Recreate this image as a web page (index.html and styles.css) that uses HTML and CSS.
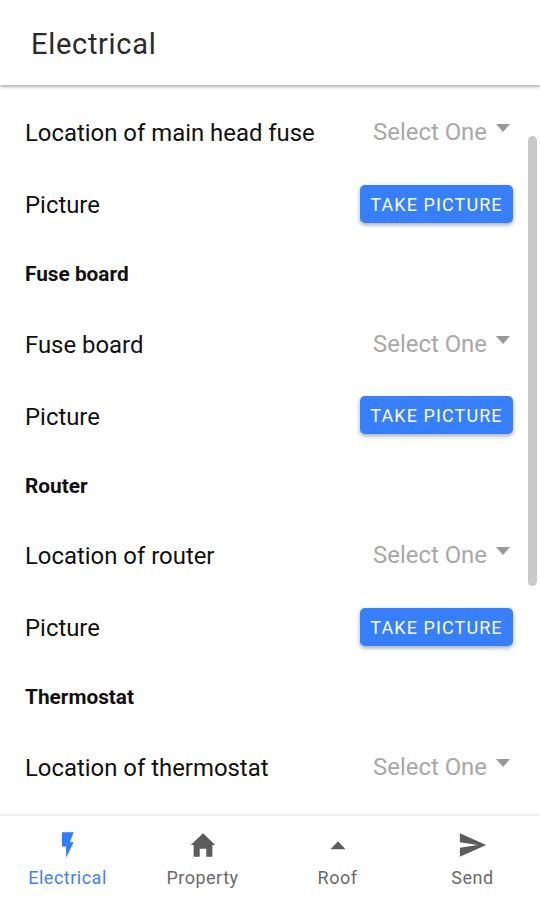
FILE: index.html
```html
<!DOCTYPE html>
<html lang="en">
<head>
  <meta charset="UTF-8">
  <meta name="viewport" content="width=device-width, initial-scale=1">
  <title>Electrical</title>
  <link rel="stylesheet" href="styles.css">
</head>
<body>
  <header class="toolbar"><h1>Electrical</h1></header>

  <main class="content">
    <div class="item">
      <span class="label">Location of main head fuse</span>
      <span class="select">Select One <i class="arrow"></i></span>
    </div>
    <div class="item">
      <span class="label">Picture</span>
      <button class="btn">TAKE PICTURE</button>
    </div>

    <h2>Fuse board</h2>
    <div class="item">
      <span class="label">Fuse board</span>
      <span class="select">Select One <i class="arrow"></i></span>
    </div>
    <div class="item">
      <span class="label">Picture</span>
      <button class="btn">TAKE PICTURE</button>
    </div>

    <h2>Router</h2>
    <div class="item">
      <span class="label">Location of router</span>
      <span class="select">Select One <i class="arrow"></i></span>
    </div>
    <div class="item">
      <span class="label">Picture</span>
      <button class="btn">TAKE PICTURE</button>
    </div>

    <h2>Thermostat</h2>
    <div class="item">
      <span class="label">Location of thermostat</span>
      <span class="select">Select One <i class="arrow"></i></span>
    </div>
    <div class="scrollbar"></div>
  </main>

  <nav class="tabs">
    <a class="tab active">
      <svg viewBox="0 0 32 32"><path d="M9.500 2.500h12.500l-4 10.500h4L14 29.500V17.500H9.500z"/></svg>
      <span>Electrical</span>
    </a>
    <a class="tab">
      <svg viewBox="0 0 32 32"><path d="M16 3.500L3 16h3v12.500h6.500V20h7v8.500H26V16h3z"/></svg>
      <span>Property</span>
    </a>
    <a class="tab">
      <svg viewBox="0 0 32 32"><path d="M16 12l8 8.500H8z"/></svg>
      <span>Roof</span>
    </a>
    <a class="tab">
      <svg viewBox="0 0 32 32"><path d="M2 3.500l28 12.500L2 28.500V19l19-3-19-3z"/></svg>
      <span>Send</span>
    </a>
  </nav>
</body>
</html>
```

FILE: styles.css
```css
* { box-sizing: border-box; }
body {
  font-family: Roboto, sans-serif;
  background: #fff;
  color: #111;
  margin: 0;
  height: 900px;
  display: flex;
  flex-direction: column;
  overflow: hidden;
}
.toolbar {
  height: 85px;
  flex: none;
  display: flex;
  align-items: center;
  padding: 3px 31px 0;
  box-shadow: 0 2px 3px rgba(0, 0, 0, .3);
}
h1 { margin: 0; font-size: 29px; font-weight: 400; letter-spacing: .7px; color: #2a2a2a; }
.content { position: relative; flex: 1; min-height: 0; padding: 12px 27px 0 25px; overflow: hidden; }
.item { height: 72px; display: flex; align-items: center; justify-content: space-between; }
.label { font-size: 23.9px; }
.select { display: flex; color: #a8a8a8; font-size: 23.9px; padding-bottom: 2px; }
.arrow {
  width: 0;
  height: 0;
  margin: 6px 3px 0 9px;
  border: 7px solid transparent;
  border-top: 8px solid #999;
  border-bottom: 0;
}
.btn {
  width: 153px;
  height: 38px;
  margin-bottom: 3px;
  padding: 1px 0 0;
  border: none;
  border-radius: 5px;
  background: #367fff;
  color: #fff;
  font: 400 18px Roboto, sans-serif;
  letter-spacing: 1.1px;
  box-shadow: 0 2px 4px rgba(0, 0, 0, .35);
}
h2 { margin: 0; height: 67.5px; line-height: 66px; font-size: 20.8px; font-weight: 700; }
.scrollbar { position: absolute; top: 51px; right: 3px; width: 9px; height: 450px; border-radius: 5px; background: #c9c9c9; }
.tabs { flex: none; height: 86px; display: flex; border-top: 2px solid #f0f0f0; }
.tab { flex: 1; display: flex; flex-direction: column; align-items: center; padding-top: 14px; color: #6a6a6a; font-size: 18px; letter-spacing: .5px; }
.tab svg { width: 30px; height: 30px; fill: #5c5c5c; }
.tab span { line-height: 24px; margin-top: 6px; }
.tab.active { color: #3f80ff; }
.tab.active svg { fill: #2d7dff; }
```
